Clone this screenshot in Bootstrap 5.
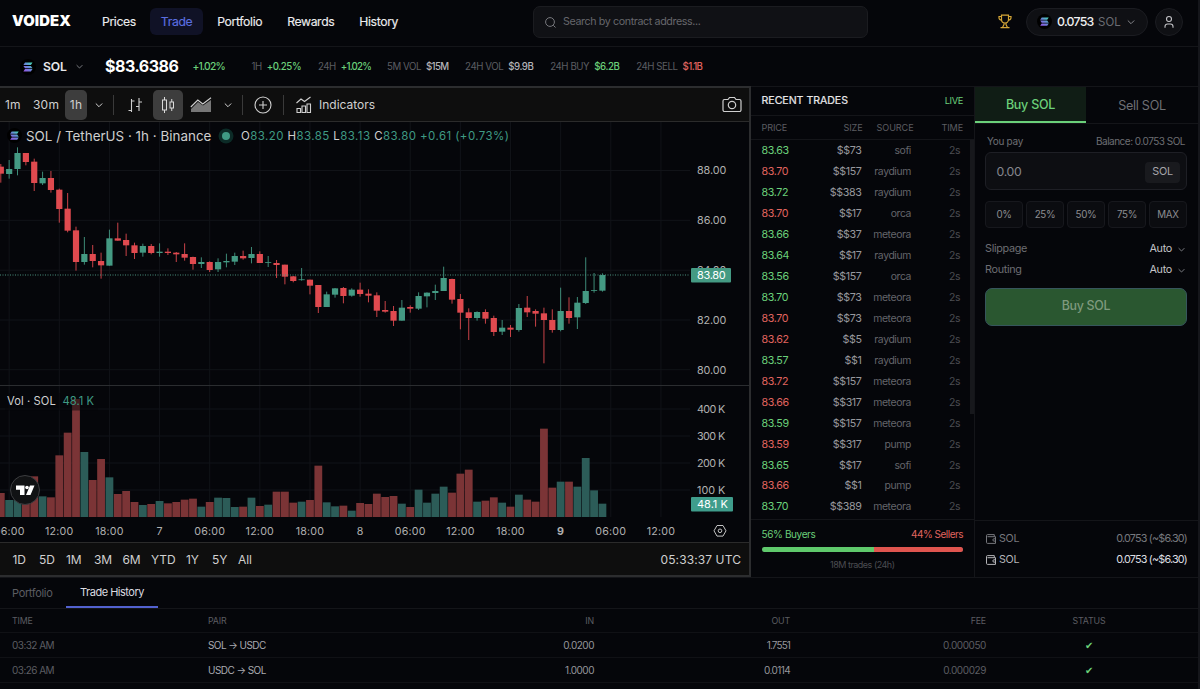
<!DOCTYPE html>
<html lang="en" data-bs-theme="dark">
<head>
<meta charset="utf-8">
<meta name="viewport" content="width=device-width, initial-scale=1">
<title>VOIDEX – SOL</title>
<link href="https://cdn.jsdelivr.net/npm/bootstrap@5.3.0/dist/css/bootstrap.min.css" rel="stylesheet">
<style>
:root{--line:#141519;--g:#6bd07a;--r:#e0645f;--dim:#5c5d62;--mid:#85868b;--tv:#3f9a84}
body{background:#05060a;color:#e8e8ea;font-family:Inter,"Liberation Sans",sans-serif;font-size:10.5px;line-height:1.2;letter-spacing:-.3px;width:1200px;height:689px;overflow:hidden;border-right:2px solid #15161b}
svg{display:block;flex:none}
.topbar{height:47px;border-bottom:1px solid var(--line);padding:0 15px 3px 12px}
.brand{font-weight:900;font-size:14.8px;letter-spacing:.12px;width:79px;color:#fff;padding-top:1px}
.menu{gap:3px}
.menu a{height:27px;padding:2px 11px 0;border-radius:6px;font-size:12.2px;letter-spacing:-.36px;color:#ececee;text-decoration:none;-webkit-text-stroke:.15px}
.menu a.on{background:#101226;color:#5b6fe0}
.search{left:533px;top:6px;width:335px;height:32px;border:1px solid #1b1c20;border-radius:7px;background:#101115;color:#66676c;font-size:10.7px;padding-left:10px;gap:6px;letter-spacing:-.38px}
.pill{height:28px;border:1px solid #1b1c21;border-radius:14px;background:#0f1014}
.ticker{height:39px;padding-left:20px;font-size:9.7px;letter-spacing:-.44px}
.ticker .cell{margin-right:16.8px;gap:5px}
.dim{color:var(--dim)}.mid{color:var(--mid)}.up{color:var(--g)}.dn{color:var(--r)}
.main{height:491px}
.chart{width:751px;border:2px solid #2c2d2f;border-left:0;letter-spacing:.2px;color:#d0d0d0}
.tools{height:34px;background:#0e0e0e;border-bottom:1.5px solid #2b2b2b;font-size:12px;padding:0 7px 0 5px}
.tools .tb{height:30px;border-radius:5px}
.tools .tb.on{background:#3d3d3d}
.tools .bar{width:1px;height:20px;background:#3a3a3a}
.legend-a{left:7px;top:5.5px;font-size:13.4px;letter-spacing:.02px;color:#cfcfcf}
.legend-b{left:7px;top:273px;font-size:11.2px;letter-spacing:.08px}
.ranges{height:33px;background:#0e0e0e;border-top:1px solid #2b2b2b;font-size:12px;letter-spacing:-.1px;padding:3px 8px 0 12.5px}
.trades{width:224px;border-top:1px solid var(--line);border-right:1px solid var(--line)}
.trow{display:grid;grid-template-columns:50px 50px 49.5px 1fr;height:20.97px;align-items:center;padding:1px 14px 0 10.5px;font-size:10.7px;line-height:14px;letter-spacing:-.38px}
.trow>:not(:first-child){text-align:right}
.trow.hd{height:24px;border-bottom:1px solid var(--line);font-size:9.1px;padding-top:0;padding-right:11px;letter-spacing:-.1px;grid-template-columns:51px 50px 51px 1fr}
.buy{flex:1;border-top:1px solid var(--line)}
.buy .tab{height:36px;font-size:13px}
.amount{height:38px;border:1px solid #1e1f25;border-radius:6px;background:#0d0e12}
.pct>span{flex:1;height:27px;border:1px solid #17181d;border-radius:4px;background:#0b0c10;font-size:9.8px;color:#8b8c91}
.cta{height:38px;border:1px solid #36555c;border-radius:7px;background:#2a5730;color:#7f9a7e;font-size:12.4px;font-weight:500}
.bal{font-size:10.8px;letter-spacing:-.8px}
.btabs{height:32px;border-top:1px solid var(--line);border-bottom:1px solid var(--line);font-size:11px}
.hrow{display:grid;grid-template-columns:196px 175px 211px 196px 196px 206px;height:25.1px;align-items:center;padding-left:12px;border-bottom:1px solid #101115;font-size:10px}
.hrow.hd{height:24px;font-size:8.8px;padding-top:1px;letter-spacing:-.15px}
.hrow>:nth-child(n+3){text-align:right}.hrow>:last-child{text-align:center}
</style>
</head>
<body class="d-flex flex-column">
<svg width="0" height="0" class="position-absolute"><defs>
<linearGradient id="sg" x1="1" y1="0" x2="0" y2="1"><stop offset="0" stop-color="#3fe0b0"/><stop offset=".5" stop-color="#6a83d8"/><stop offset="1" stop-color="#9a52e8"/></linearGradient>
<symbol id="sol" viewBox="0 0 16 16"><circle cx="8" cy="8" r="8" fill="#000"/><path d="M5 3.600h7.500l-1.600 2.400H3.400zM3.400 6.900h7.500l1.600 2.300H5zM5 10.100h7.500l-1.600 2.400H3.400z" fill="url(#sg)"/></symbol>
<symbol id="chev" viewBox="0 0 10 10"><path d="M1.800 3.500 5 6.700l3.200-3.200" fill="none" stroke="currentColor"/></symbol>
<symbol id="wallet" viewBox="0 0 12 12"><path d="M9.300 3.500V1.600H2.500a1 1 0 0 0-1 1v6.800a1 1 0 0 0 1 1h8V3.700H2.500M10.500 5.800H9a1.100 1.100 0 0 0 0 2.300h1.500z" fill="none" stroke="currentColor"/></symbol>
</defs></svg>

<nav class="topbar d-flex align-items-center position-relative">
 <div class="brand">VOIDEX</div>
 <div class="menu d-flex">
  <a class="d-flex align-items-center" href="#">Prices</a><a class="on d-flex align-items-center" href="#">Trade</a><a class="d-flex align-items-center" href="#">Portfolio</a><a class="d-flex align-items-center" href="#">Rewards</a><a class="d-flex align-items-center" href="#">History</a>
 </div>
 <div class="search position-absolute d-flex align-items-center"><svg width="13" height="13" viewBox="0 0 13 13" fill="none" stroke="#77787d"><circle cx="6" cy="6" r="4.400"/><path d="m9.300 9.300 2.200 2.200"/></svg>Search by contract address...</div>
 <div class="ms-auto d-flex align-items-center">
  <svg width="14" height="15" viewBox="0 0 14 15" fill="none" stroke="#d5a637" stroke-width="1.200" style="margin-right:14px"><path d="M3.500 1.200h7v4.300a3.500 3.500 0 0 1-7 0zM3.500 2.500H1v1.200a2.400 2.400 0 0 0 2.700 2.400M10.500 2.500H13v1.200a2.400 2.400 0 0 1-2.700 2.400M6 9v1.500L4.500 13.500M8 9v1.500l1.500 3M2.500 13.700h9"/></svg>
  <div class="pill d-flex align-items-center" style="width:122px;padding-left:10px;gap:5px;margin-right:7px"><svg width="15" height="15"><use href="#sol"/></svg><span class="fw-medium" style="font-size:12.300px;letter-spacing:-.72px;width:36px;padding-top:1px;color:#f0f0f2">0.0753</span><span style="font-size:11.500px;color:#6b6c72;padding-top:2px;letter-spacing:0">SOL</span><svg width="10" height="10" class="mid"><use href="#chev"/></svg></div>
  <div class="pill d-flex align-items-center justify-content-center" style="width:28px"><svg width="12" height="14" viewBox="0 0 12 14" fill="none" stroke="#c4c4c8" stroke-width="1.100"><circle cx="6" cy="4" r="2.500"/><path d="M2 12.800v-1.300a2.500 2.500 0 0 1 2.500-2.500h3a2.500 2.500 0 0 1 2.500 2.500v1.300"/></svg></div>
 </div>
</nav>

<div class="ticker d-flex align-items-center">
 <svg width="16" height="16"><use href="#sol"/></svg>
 <span class="fw-semibold" style="font-size:12.200px;letter-spacing:-.1px;margin-left:7px;width:32px;padding-top:1px">SOL</span>
 <svg width="9" height="9" class="mid"><use href="#chev"/></svg>
 <span class="fw-bold text-white" style="font-size:16px;letter-spacing:-.5px;margin-left:21px;width:87.500px">$83.6386</span>
 <span class="up fw-medium" style="font-size:10.300px;letter-spacing:-.8px;width:59px">+1.02%</span>
 <span class="cell d-flex"><span class="dim">1H</span><span class="up fw-medium">+0.25%</span></span>
 <span class="cell d-flex" style="margin-right:16px"><span class="dim">24H</span><span class="up fw-medium" style="letter-spacing:-.8px">+1.02%</span></span>
 <span class="cell d-flex"><span class="dim">5M VOL</span><span class="fw-medium" style="color:#b5b5b9;letter-spacing:-.7px">$15M</span></span>
 <span class="cell d-flex"><span class="dim">24H VOL</span><span class="fw-medium" style="color:#b5b5b9">$9.9B</span></span>
 <span class="cell d-flex"><span class="dim">24H BUY</span><span class="up fw-medium">$6.2B</span></span>
 <span class="cell d-flex"><span class="dim">24H SELL</span><span class="dn fw-medium" style="letter-spacing:-.6px">$1.1B</span></span>
</div>

<div class="main d-flex">
 <section class="chart d-flex flex-column">
  <div class="tools d-flex align-items-center">
   <span style="width:28px;padding-top:1px">1m</span><span style="width:32px;padding-top:1px">30m</span>
   <span class="tb on d-flex align-items-center justify-content-center" style="width:22px;padding-top:1px">1h</span>
   <svg width="10" height="10" style="margin-left:7px"><use href="#chev"/></svg>
   <span class="bar" style="margin:0 14px 0 9px"></span>
   <svg width="14" height="16" viewBox="0 0 14 16" fill="none" stroke="#cfcfcf" stroke-width="1.100"><path d="M3.500 2v13M.500 13.500h3M3.500 4h3M11 1v13M8 9.500h3M11 5h3"/></svg>
   <span class="tb on d-flex align-items-center justify-content-center" style="width:30px;margin:0 7px 0 11px"><svg width="14" height="18" viewBox="0 0 14 18" fill="none" stroke="#dadada"><rect x="1.500" y="4" width="4" height="10"/><rect x="9" y="6" width="3.500" height="6"/><path d="M3.500 1v3M3.500 14v3M10.750 3v3M10.750 12v3"/></svg></span>
   <svg width="22" height="16" viewBox="0 0 22 16"><path d="M1 15v-3l7-7 5 3.500L21 3v12z" fill="#777"/><path d="m.800 10 7-7 5 4L21 .800" fill="none" stroke="#cfcfcf" stroke-width="1.100"/></svg>
   <svg width="10" height="10" style="margin-left:11px"><use href="#chev"/></svg>
   <span class="bar" style="margin:0 11px 0 9px"></span>
   <svg width="18" height="18" viewBox="0 0 18 18" fill="none" stroke="#cfcfcf" stroke-width="1.100"><circle cx="9" cy="9" r="8"/><path d="M9 5v8M5 9h8"/></svg>
   <span class="bar" style="margin:0 11px 0 11px"></span>
   <svg width="18" height="18" viewBox="0 0 18 18" fill="none" stroke="#cfcfcf" stroke-width="1.100"><path d="m1.500 7 4.500-4 3.500 2.500L15.500 1M2 16.500v-4h3.500v4zM7 16.500v-6.500h3.500v6.500zM12 16.500V8h3.500v8.500z"/></svg>
   <span style="margin-left:6px;padding-top:1px;letter-spacing:0">Indicators</span>
   <svg class="ms-auto" width="20" height="17" viewBox="0 0 20 17" fill="none" stroke="#cfcfcf" stroke-width="1.200"><path d="M2.500 3.500h3.500L7.500 1.500h5L14 3.500h3.500a1.500 1.500 0 0 1 1.500 1.500v9a1.500 1.500 0 0 1-1.500 1.500h-15A1.500 1.500 0 0 1 1 14V5a1.500 1.500 0 0 1 1.500-1.500z"/><circle cx="10" cy="9" r="3.700"/></svg>
  </div>
  <div class="position-relative" style="height:420px">
   <svg id="plot" width="749" height="420" viewBox="0 122 749 420" font-family="Inter, sans-serif" font-size="11"></svg>
   <div class="legend-a position-absolute d-flex align-items-center text-nowrap">
    <svg width="15" height="15"><use href="#sol"/></svg><span style="margin-left:4px;width:192px">SOL / TetherUS · 1h · Binance</span>
    <svg width="16" height="16" viewBox="0 0 16 16"><circle cx="8" cy="8" r="7.500" fill="#0c2b27"/><circle cx="8" cy="8" r="4" fill="#3f9a84"/></svg>
    <span style="font-size:11.500px;margin-left:7px;padding-top:2px;letter-spacing:.42px;color:#3f9a84"><b class="fw-normal" style="color:#cfcfcf">O</b>83.20 <b class="fw-normal" style="color:#cfcfcf">H</b>83.85 <b class="fw-normal" style="color:#cfcfcf">L</b>83.13 <b class="fw-normal" style="color:#cfcfcf">C</b>83.80 +0.61 (+0.73%)</span>
   </div>
   <div class="legend-b position-absolute d-flex" style="gap:6.500px"><span>Vol · SOL</span><span style="color:#3f9a84">48.1 K</span></div>
  </div>
  <div class="ranges d-flex align-items-center">
   <span style="width:26.500px">1D</span><span style="width:27px">5D</span><span style="width:28px">1M</span><span style="width:28.500px">3M</span><span style="width:28.500px">6M</span><span style="width:35px">YTD</span><span style="width:26px">1Y</span><span style="width:26px">5Y</span><span>All</span><span class="ms-auto" style="letter-spacing:.1px">05:33:37 UTC</span>
  </div>
 </section>

 <section class="trades d-flex flex-column position-relative">
  <div class="d-flex align-items-center justify-content-between" style="height:29px;padding:0 11px 0 10.500px;border-bottom:1px solid var(--line)"><span style="font-size:10.600px;letter-spacing:-.03px;-webkit-text-stroke:.2px">RECENT TRADES</span><span class="up" style="font-size:9.300px;letter-spacing:-.35px">LIVE</span></div>
  <div class="trow hd dim"><span>PRICE</span><span>SIZE</span><span>SOURCE</span><span>TIME</span></div>
  <div id="rows" style="height:379px"></div>
  <div class="position-absolute" style="right:0;top:53px;width:4px;height:274px;background:#17181c"></div>
  <div style="border-top:1px solid var(--line);padding:8px 11px 0 10.500px;font-size:10px">
   <div class="d-flex justify-content-between"><span class="up" style="letter-spacing:-.38px">56% Buyers</span><span class="dn" style="letter-spacing:-.5px">44% Sellers</span></div>
   <div class="progress" style="height:5px;margin:7px 0 8px;border-radius:3px"><div class="progress-bar" style="width:56%;background:#5fc96c"></div><div class="progress-bar" style="width:44%;background:#e0554f"></div></div>
   <div class="text-center" style="font-size:9px;letter-spacing:-.5px;color:#4c4d52">18M trades (24h)</div>
  </div>
 </section>

 <section class="buy d-flex flex-column">
  <div class="d-flex" style="border-bottom:1px solid var(--line);height:37px"><div class="tab d-flex align-items-center justify-content-center up fw-medium" style="width:111px;height:36px;background:#101d15;border-bottom:2px solid var(--g);font-size:12.500px;letter-spacing:-.25px;padding-top:1px">Buy SOL</div><div class="tab d-flex align-items-center justify-content-center" style="flex:1;color:#6e6f74;letter-spacing:-.28px;font-size:12.600px;padding-top:1px">Sell SOL</div></div>
  <div style="padding:11px 11px 0 10px">
   <div class="d-flex justify-content-between" style="color:#6d6e73;font-size:10px;padding:0 2px;height:13px"><span>You pay</span><span style="letter-spacing:-.5px">Balance: 0.0753 SOL</span></div>
   <div class="amount d-flex align-items-center justify-content-between" style="margin-top:4px;padding:2px 6px 0 10.500px"><span style="font-size:12.300px;color:#85868d">0.00</span><span class="d-flex align-items-center justify-content-center" style="width:35px;height:21px;border-radius:4px;background:#191a1e;color:#a5a5aa;font-size:10.800px">SOL</span></div>
   <div class="pct d-flex" style="gap:3px;margin-top:11px"><span class="d-flex align-items-center justify-content-center">0%</span><span class="d-flex align-items-center justify-content-center">25%</span><span class="d-flex align-items-center justify-content-center">50%</span><span class="d-flex align-items-center justify-content-center">75%</span><span class="d-flex align-items-center justify-content-center">MAX</span></div>
   <div class="d-flex align-items-center" style="height:21px;margin-top:11px;font-size:10.800px"><span style="color:#6d6e73">Slippage</span><span class="ms-auto" style="color:#c4c4c8">Auto</span><svg class="mid" width="9" height="9" style="margin:0 1px 0 5px"><use href="#chev"/></svg></div>
   <div class="d-flex align-items-center" style="height:21px;font-size:10.800px"><span style="color:#6d6e73">Routing</span><span class="ms-auto" style="color:#c4c4c8">Auto</span><svg class="mid" width="9" height="9" style="margin:0 1px 0 5px"><use href="#chev"/></svg></div>
   <div class="cta d-flex align-items-center justify-content-center" style="margin-top:6.500px">Buy SOL</div>
  </div>
  <div class="mt-auto" style="height:57px;border-top:1px solid var(--line);padding:8px 11px 0 10px;font-size:10.700px">
   <div class="d-flex align-items-center" style="height:21px;color:#77787d"><svg width="12" height="12" style="margin-top:-1px"><use href="#wallet"/></svg><span style="margin-left:2px">SOL</span><span class="bal ms-auto">0.0753 (~$6.30)</span></div>
   <div class="d-flex align-items-center" style="height:21px;color:#b4b4b8"><svg width="12" height="12" style="margin-top:-1px"><use href="#wallet"/></svg><span style="margin-left:2px">SOL</span><span class="bal ms-auto" style="color:#dedee1">0.0753 (~$6.30)</span></div>
  </div>
 </section>
</div>

<section>
 <div class="btabs d-flex"><span class="dim" style="width:66px;padding:9px 0 0 12px;letter-spacing:-.34px">Portfolio</span><span class="text-center" style="width:92px;padding-top:8px;border-bottom:2px solid #5261cf;color:#dcdce0;letter-spacing:-.5px">Trade History</span></div>
 <div class="hrow hd dim"><span>TIME</span><span>PAIR</span><span>IN</span><span>OUT</span><span>FEE</span><span>STATUS</span></div>
 <div class="hrow"><span class="dim" style="letter-spacing:-.55px">03:32 AM</span><span style="color:#aaaab0;letter-spacing:-.55px">SOL → USDC</span><span style="color:#96979c;letter-spacing:-.5px">0.0200</span><span style="color:#96979c;letter-spacing:-.9px">1.7551</span><span class="dim" style="letter-spacing:-.42px">0.000050</span><span class="up">✔</span></div>
 <div class="hrow"><span class="dim" style="letter-spacing:-.55px">03:26 AM</span><span style="color:#aaaab0;letter-spacing:-.55px">USDC → SOL</span><span style="color:#96979c;letter-spacing:-.5px">1.0000</span><span style="color:#96979c;letter-spacing:-.6px">0.0114</span><span class="dim" style="letter-spacing:-.42px">0.000029</span><span class="up">✔</span></div>
</section>

<script src="https://cdn.jsdelivr.net/npm/bootstrap@5.3.0/dist/js/bootstrap.bundle.min.js"></script>
<script>
const trades = `u83.63 73 sofi,d83.70 157 raydium,u83.72 383 raydium,d83.70 17 orca,u83.66 37 meteora,u83.64 17 raydium,u83.56 157 orca,u83.70 73 meteora,d83.70 73 meteora,d83.62 5 raydium,u83.57 1 raydium,d83.72 157 meteora,d83.66 317 meteora,u83.59 157 meteora,d83.59 317 pump,u83.65 17 sofi,d83.66 1 pump,u83.70 389 meteora`;
document.getElementById('rows').innerHTML = trades.split(',').map(t => {
  const [p, s, src] = t.split(' ');
  return `<div class="trow"><span class="${p[0] == 'u' ? 'up' : 'dn'}">${p.slice(1)}</span><span style="color:#97989d">$$${s}</span><span style="color:#64656a;font-size:10.4px">${src}</span><span style="color:#4c4d52;font-size:10.4px">2s</span></div>`;
}).join('');

// hourly candles: direction, high, body top, body bottom, low in thirds of a pixel below y=140
const candles = `r72,80,101,128 g60,87,102,116 g22,39,87,106 r39,39,66,76 r56,65,129,153 g95,114,130,135 r93,114,150,158 r146,149,207,248 r159,206,272,277 r260,271,366,392 g291,342,366,374 r315,342,363,382 r338,363,376,416 g269,295,377,377 r248,295,302,302 r281,300,316,348 r308,316,339,357 g311,318,338,350 r312,318,339,343 g310,335,339,350 r325,335,339,345 r336,338,343,366 r310,342,353,362 r350,351,372,389 g352,366,372,384 r364,366,390,396 g355,366,388,396 g341,363,367,382 g338,348,365,375 r332,348,355,359 g321,342,354,370 r334,342,369,369 g348,366,368,381 r360,369,375,414 r374,374,410,433 r408,409,423,427 g384,418,420,422 r419,419,437,463 r435,435,501,519 g455,463,501,501 g444,445,464,473 r441,444,468,490 g445,449,467,470 r428,449,462,470 r448,461,467,487 r457,466,512,531 r483,510,515,518 r498,513,542,558 g480,503,542,542 r496,501,506,518 g457,468,506,510 g457,458,469,502 g434,453,459,480 g380,414,453,453 r416,417,479,491 r462,477,518,568 r505,517,534,600 g514,516,534,542 r508,516,536,551 r527,534,576,588 g540,563,575,585 r555,563,569,591 g492,504,570,575 r468,503,517,531 r508,513,521,560 r503,520,540,670 r508,540,570,578 g443,513,570,574 r472,513,534,551 g471,488,532,567 g352,453,489,492 g399,450,452,458 g400,405,452,455`.split(' ');
// bar heights, thirds of a pixel
const vol = [72,51,51,46,122,62,59,185,253,354,195,111,174,119,69,78,45,36,39,48,41,45,52,55,31,45,58,57,30,31,58,33,37,76,76,43,46,51,154,44,32,34,19,42,39,70,60,63,40,30,82,43,70,91,73,130,142,46,49,59,43,31,67,52,46,265,88,106,106,91,177,80,40];
let s = '';
const X = i => 0.8 + 8.356 * i, G = '#449a83', R = '#e04a4f';
const times = ['06:00','12:00','18:00','7','06:00','12:00','18:00','8','06:00','12:00','18:00','9','06:00','12:00'];
times.forEach((t, i) => {
  const x = X(1 + 6 * i);
  s += `<path d="M${x} 122V517" stroke="#111318"/><text x="${x}" y="534.6" text-anchor="middle" fill="#b0b0b0" font-size="10.7" letter-spacing=".2" ${t == '9' ? 'font-weight="700"' : ''}>${t}</text>`;
});
[[170.5,'88.00'],[220.3,'86.00'],[270.2,'84.00'],[320,'82.00'],[369.7,'80.00'],[409,'400 K'],[436,'300 K'],[463,'200 K'],[490,'100 K']].forEach(([y, t]) =>
  s += `<path d="M0 ${y}H690" stroke="#111318"/><text x="697" y="${y + 3.9}" fill="#b0b0b0" font-size="10.8" textLength="${t.includes('K') ? 28.5 : 29.5}">${t}</text>`);
candles.forEach((c, i) => {
  const [h, a, b, l] = c.slice(1).split(',').map(v => 140 + v / 3), col = c[0] == 'g' ? G : R, x = X(i);
  s += `<rect x="${x - 3.9}" y="${517 - vol[i] / 3}" width="7.8" height="${vol[i] / 3}" fill="${c[0] == 'g' ? '#2c5c58' : '#7b3436'}"/>`;
  s += `<path d="M${x} ${h}V${l}" stroke="${col}" stroke-width=".9"/><rect x="${x - 3.1}" y="${a}" width="6.2" height="${Math.max(b - a, .8)}" fill="${col}"/>`;
});
s += `<rect x="5" y="393" width="93" height="17.5" fill="#05060a" opacity=".5"/>
<path d="M0 385.5H749" stroke="#2b2d30"/>
<path d="M0 275H690" stroke="#4a8f7d" stroke-dasharray="1 1.5"/>
<rect x="691" y="268" width="40" height="14.5" rx="1" fill="#449a83"/><text x="697" y="279" fill="#fff" textLength="29">83.80</text>
<rect x="691" y="497" width="42" height="14.5" rx="1" fill="#3f9d8c"/><text x="697" y="508" fill="#fff" textLength="31">48.1 K</text>
<circle cx="25" cy="490" r="14.5" fill="#111214" stroke="#3c3d40"/>
<path d="M16 485.5h8.500v9.500h-4.500v-5.300h-4zM30 485.500h4.500l-4 9.500h-4.500z" fill="#fff"/><circle cx="27" cy="487.5" r="1.8" fill="#fff"/>
<path d="m717 525.5h6l3 5.300-3 5.300h-6l-3-5.300z" fill="none" stroke="#c4c4c4"/><circle cx="720" cy="530.8" r="1.8" fill="none" stroke="#c4c4c4"/>`;
document.getElementById('plot').innerHTML = s;
</script>
</body>
</html>
